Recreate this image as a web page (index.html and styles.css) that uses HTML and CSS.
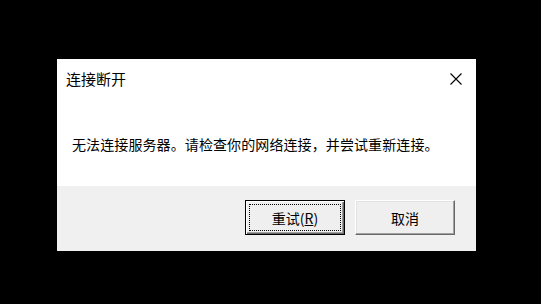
FILE: index.html
```html
<!DOCTYPE html>
<html lang="zh-CN">
<head>
  <meta charset="UTF-8">
  <link rel="stylesheet" href="styles.css">
  <title>连接断开</title>
</head>
<body class="page">
  <div class="dialog">
    <header class="dialog__header">
      <span class="dialog__title">连接断开</span>
      <svg class="dialog__close" width="12" height="12" viewBox="0 0 12 12">
        <path d="M0.5 0.5 L11.5 11.5 M11.5 0.5 L0.5 11.5" stroke="#000" stroke-width="1.1" fill="none"/>
      </svg>
    </header>
    <p class="dialog__message">无法连接服务器。请检查你的网络连接，并尝试重新连接。</p>
    <footer class="dialog__footer">
      <button class="button button_default"><span class="button__focus">重试(<u>R</u>)</span></button>
      <button class="button">取消</button>
    </footer>
  </div>
</body>
</html>
```

FILE: styles.css
```css
html, .page {
  margin: 0;
  background: #000;
}

* {
  box-sizing: border-box;
}

.page {
  width: 541px;
  height: 304px;
  padding: 59px 0 0 57px;
  font-family: "Noto Sans CJK SC", "Microsoft YaHei", sans-serif;
  color: #000;
}

.dialog {
  width: 419px;
  height: 192px;
  background: #fff;
  display: flex;
  flex-direction: column;
}

.dialog__header {
  height: 40px;
  display: flex;
  align-items: center;
  justify-content: space-between;
  padding: 0 14px 0 9px;
}

.dialog__title {
  font-size: 15px;
  line-height: 20px;
}

.dialog__close {
  display: block;
}

.dialog__message {
  margin: 0;
  flex: 1;
  padding: 35px 0 0 15px;
  font-size: 14px;
  line-height: 20px;
  letter-spacing: 0.1px;
}

.dialog__footer {
  height: 65px;
  background: #f0f0f0;
  display: flex;
  justify-content: flex-end;
  align-items: flex-start;
  gap: 10px;
  padding: 14px 21px 0 0;
}

.button {
  width: 100px;
  height: 35px;
  padding: 0;
  font-family: inherit;
  font-size: 14px;
  color: #000;
  background: #efefef;
  border: 1px solid;
  border-color: #fff #696969 #696969 #fff;
  box-shadow: inset -1px -1px 0 #a0a0a0, inset 1px 1px 0 #e3e3e3;
  display: flex;
  align-items: center;
  justify-content: center;
}

.button_default {
  border-color: #000;
  box-shadow: inset 1px 1px 0 #fff, inset -1px -1px 0 #696969, inset -2px -2px 0 #a0a0a0;
  position: relative;
}

.button__focus {
  line-height: 20px;
}

.button_default::after {
  content: "";
  position: absolute;
  inset: 3px;
  border: 1px dotted #000;
}
```
